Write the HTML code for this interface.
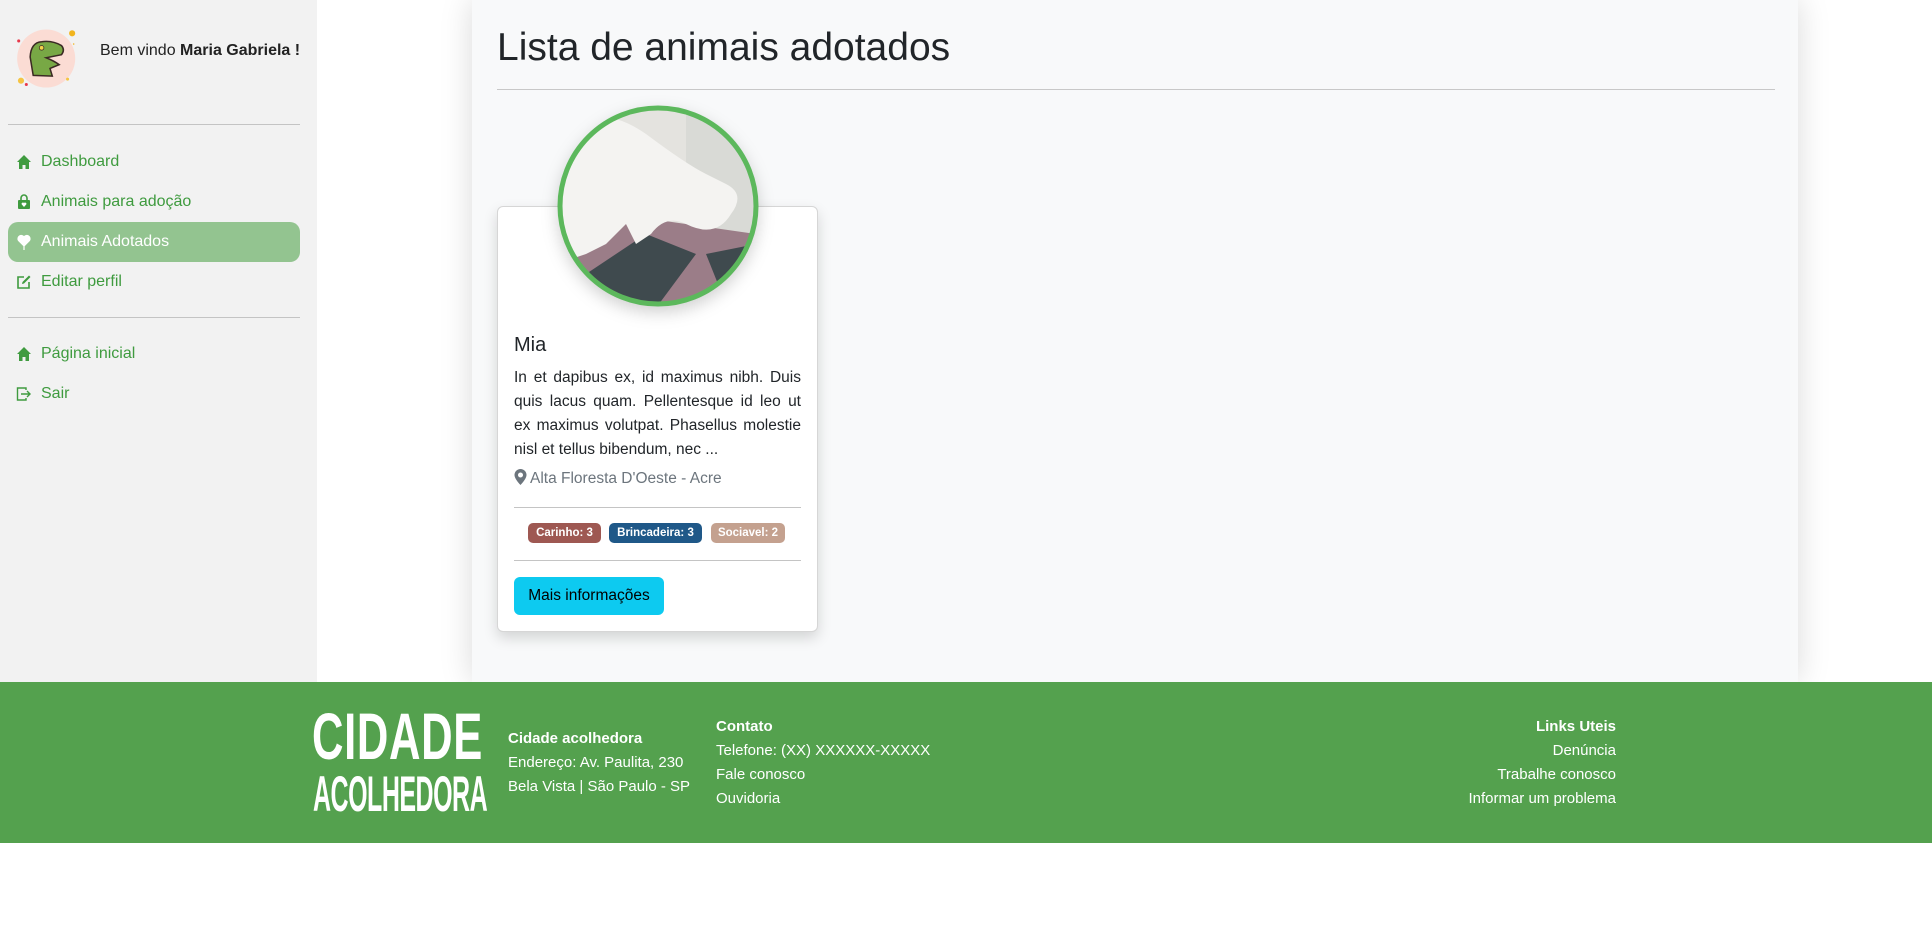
<!DOCTYPE html>
<html><head><meta charset="utf-8"><style>
*{box-sizing:border-box;margin:0;padding:0}
body{width:1932px;height:929px;position:relative;background:#fff;font-family:"Liberation Sans",sans-serif;overflow:hidden}
.side{position:absolute;left:0;top:0;width:317px;height:682px;background:#f2f2f2}
.abs{position:absolute}
.nav{position:absolute;left:8px;width:292px;height:40px;font-size:16px;color:#3f9b3f;display:flex;align-items:center;padding-left:8px}
.nav svg{width:16px;height:16px;margin-right:9px}
.nav.act{background:#93c490;color:#fff;border-radius:10px}
.hr{position:absolute;height:1px;background:#c4c4c4}
.main{position:absolute;left:472px;top:0;width:1326px;height:682px;background:#f8f9fa;box-shadow:0 0 30px rgba(0,0,0,.15)}
.card{position:absolute;left:497px;top:206px;width:321px;height:426px;background:#fff;border:1px solid #d6d6d6;border-radius:6px;box-shadow:0 6px 14px rgba(0,0,0,.15)}
.badge{position:absolute;top:523px;height:20px;border-radius:5px;color:#fff;font-size:11.5px;font-weight:bold;line-height:20px;text-align:center}
.foot{position:absolute;left:0;top:682px;width:1932px;height:161px;background:#54a14e;color:#fff;font-size:15px}
.foot div{position:absolute;white-space:nowrap}
</style></head><body>
<div class="side">
  <svg class="abs" style="left:8px;top:14px" width="84" height="86" viewBox="0 0 110 110">
    <circle cx="50" cy="57" r="38" fill="#fbdcd4"/>
    <circle cx="84" cy="24" r="4" fill="#f2b51e"/><circle cx="14" cy="34" r="2" fill="#e8394b"/>
    <circle cx="17" cy="86" r="4" fill="#f5c443"/><circle cx="24" cy="91" r="2" fill="#e8394b"/>
    <circle cx="78" cy="84" r="2" fill="#f5c443"/><circle cx="86" cy="38" r="1" fill="#f2b51e"/>
    <path d="M33 79 L29 55 Q30 36 44 35 Q58 33 70 40 Q75 46 70 52 L50 56 Q60 60 67 65 L55 70 L58 80 Z" fill="#78a845" stroke="#3b2a24" stroke-width="2"/>
    <circle cx="44" cy="43" r="3" fill="#f4d24a" stroke="#3b2a24"/>
  </svg>
  <div class="abs" style="left:100px;top:42px;font-size:16px;color:#222">Bem vindo <b>Maria Gabriela !</b></div>
  <div class="hr" style="left:8px;top:124px;width:292px"></div>
  <div class="nav" style="top:142px"><svg viewBox="0 0 16 16"><path d="M8 1 L1 8 H3 V15 H6.5 V11 H9.5 V15 H13 V8 H15 Z" fill="#3f9b3f"/></svg>Dashboard</div>
  <div class="nav" style="top:182px"><svg viewBox="0 0 16 16"><path d="M5 6 V4 a3 3 0 0 1 6 0 V6" stroke="#3f9b3f" stroke-width="1.6" fill="none"/><rect x="2" y="6" width="12" height="9" rx="1" fill="#3f9b3f"/><path d="M8 13 L5.8 10.5 a1.2 1.2 0 0 1 2.2-1.3 a1.2 1.2 0 0 1 2.2 1.3Z" fill="#fff"/></svg>Animais para adoção</div>
  <div class="nav act" style="top:222px"><svg viewBox="0 0 16 16"><path d="M8 12 L2.5 6.5 a3 3 0 0 1 5.5-3.5 a3 3 0 0 1 5.5 3.5Z M8 12 V16" fill="#fff" stroke="#fff" stroke-width="1.2"/></svg>Animais Adotados</div>
  <div class="nav" style="top:262px"><svg viewBox="0 0 16 16"><path d="M13 8 V14 H2 V3 H8" stroke="#3f9b3f" stroke-width="1.6" fill="none"/><path d="M6 10 L6.5 8 L13 1.5 L14.5 3 L8 9.5Z" fill="#3f9b3f"/></svg>Editar perfil</div>
  <div class="hr" style="left:8px;top:317px;width:292px"></div>
  <div class="nav" style="top:334px"><svg viewBox="0 0 16 16"><path d="M8 1 L1 8 H3 V15 H6.5 V11 H9.5 V15 H13 V8 H15 Z" fill="#3f9b3f"/></svg>Página inicial</div>
  <div class="nav" style="top:374px"><svg viewBox="0 0 16 16"><path d="M10 4 V2 H1.5 V14 H10 V12" stroke="#3f9b3f" stroke-width="1.4" fill="none"/><path d="M5 8 H14 M11 5 L14 8 L11 11" stroke="#3f9b3f" stroke-width="1.4" fill="none"/></svg>Sair</div>
</div>
<div class="main"></div>
<div class="abs" style="left:497px;top:26px;font-size:39px;font-weight:500;color:#212529">Lista de animais adotados</div>
<div class="hr" style="left:497px;top:89px;width:1278px;background:#c8c8c8"></div>
<div class="card"></div>
<svg class="abs" style="left:556px;top:104px;filter:drop-shadow(0 6px 8px rgba(0,0,0,.18))" width="204" height="204" viewBox="0 0 204 204">
  <defs><clipPath id="c"><circle cx="102" cy="102" r="97"/></clipPath></defs>
  <g clip-path="url(#c)">
    <rect width="204" height="204" fill="#e4e3df"/>
    <rect x="130" y="0" width="74" height="140" fill="#d9dad6"/>
    <path d="M0 150 L60 110 L200 130 L204 204 L0 204Z" fill="#9b7d88"/>
    <path d="M30 170 L90 130 L140 150 L100 204 L30 204Z" fill="#3f4a4e"/>
    <path d="M150 150 L200 140 L204 190 L170 200Z" fill="#3f4a4e"/>
    <path d="M0 30 Q40 -5 90 30 Q130 60 150 70 L170 80 Q190 90 175 110 Q160 135 130 120 Q110 110 95 130 L80 140 L70 120 L50 140 L30 150 L0 160Z" fill="#f4f3f1"/>
  </g>
  <circle cx="102" cy="102" r="98" fill="none" stroke="#5cb85c" stroke-width="5"/>
</svg>
<div class="abs" style="left:514px;top:334px;font-size:20px;font-weight:500;color:#212529">Mia</div>
<div class="abs" style="left:514px;top:366px;width:287px;font-size:15.5px;line-height:24px;color:#212529;text-align:justify">In et dapibus ex, id maximus nibh. Duis quis lacus quam. Pellentesque id leo ut ex maximus volutpat. Phasellus molestie nisl et tellus bibendum, nec ...</div>
<div class="abs" style="left:514px;top:469px;font-size:15.5px;color:#6c757d"><svg width="13" height="16" viewBox="0 0 12 16" style="vertical-align:-2px;margin-right:3px"><path d="M6 0 a6 6 0 0 1 6 6 C12 10 6 16 6 16 C6 16 0 10 0 6 a6 6 0 0 1 6-6Z M6 3.5 a2.5 2.5 0 1 0 .01 0Z" fill="#6c757d" fill-rule="evenodd"/></svg>Alta Floresta D'Oeste - Acre</div>
<div class="hr" style="left:514px;top:507px;width:287px"></div>
<div class="badge" style="left:528px;width:73px;background:#9e5852">Carinho: 3</div>
<div class="badge" style="left:609px;width:93px;background:#1f5888">Brincadeira: 3</div>
<div class="badge" style="left:711px;width:74px;background:#c4a18f">Sociavel: 2</div>
<div class="hr" style="left:514px;top:560px;width:287px"></div>
<div class="abs" style="left:514px;top:577px;width:150px;height:38px;background:#0dcaf0;border-radius:6px;font-size:15.5px;line-height:38px;text-align:center;color:#000">Mais informações</div>
<div class="foot">
  <div style="left:312px;top:24px;font-weight:bold;font-size:66px;line-height:60px;letter-spacing:1px;transform:scaleX(0.66);transform-origin:left">CIDADE</div>
  <div style="left:313px;top:88px;font-weight:bold;font-size:50px;line-height:48px;letter-spacing:-1px;transform:scaleX(0.5);transform-origin:left">ACOLHEDORA</div>
  <div style="left:508px;top:48px;font-weight:bold">Cidade acolhedora</div>
  <div style="left:508px;top:72px">Endereço: Av. Paulita, 230</div>
  <div style="left:508px;top:96px">Bela Vista | São Paulo - SP</div>
  <div style="left:716px;top:36px;font-weight:bold">Contato</div>
  <div style="left:716px;top:60px">Telefone: (XX) XXXXXX-XXXXX</div>
  <div style="left:716px;top:84px">Fale conosco</div>
  <div style="left:716px;top:108px">Ouvidoria</div>
  <div style="right:316px;top:36px;font-weight:bold;text-align:right">Links Uteis</div>
  <div style="right:316px;top:60px">Denúncia</div>
  <div style="right:316px;top:84px">Trabalhe conosco</div>
  <div style="right:316px;top:108px">Informar um problema</div>
</div>
</body></html>
